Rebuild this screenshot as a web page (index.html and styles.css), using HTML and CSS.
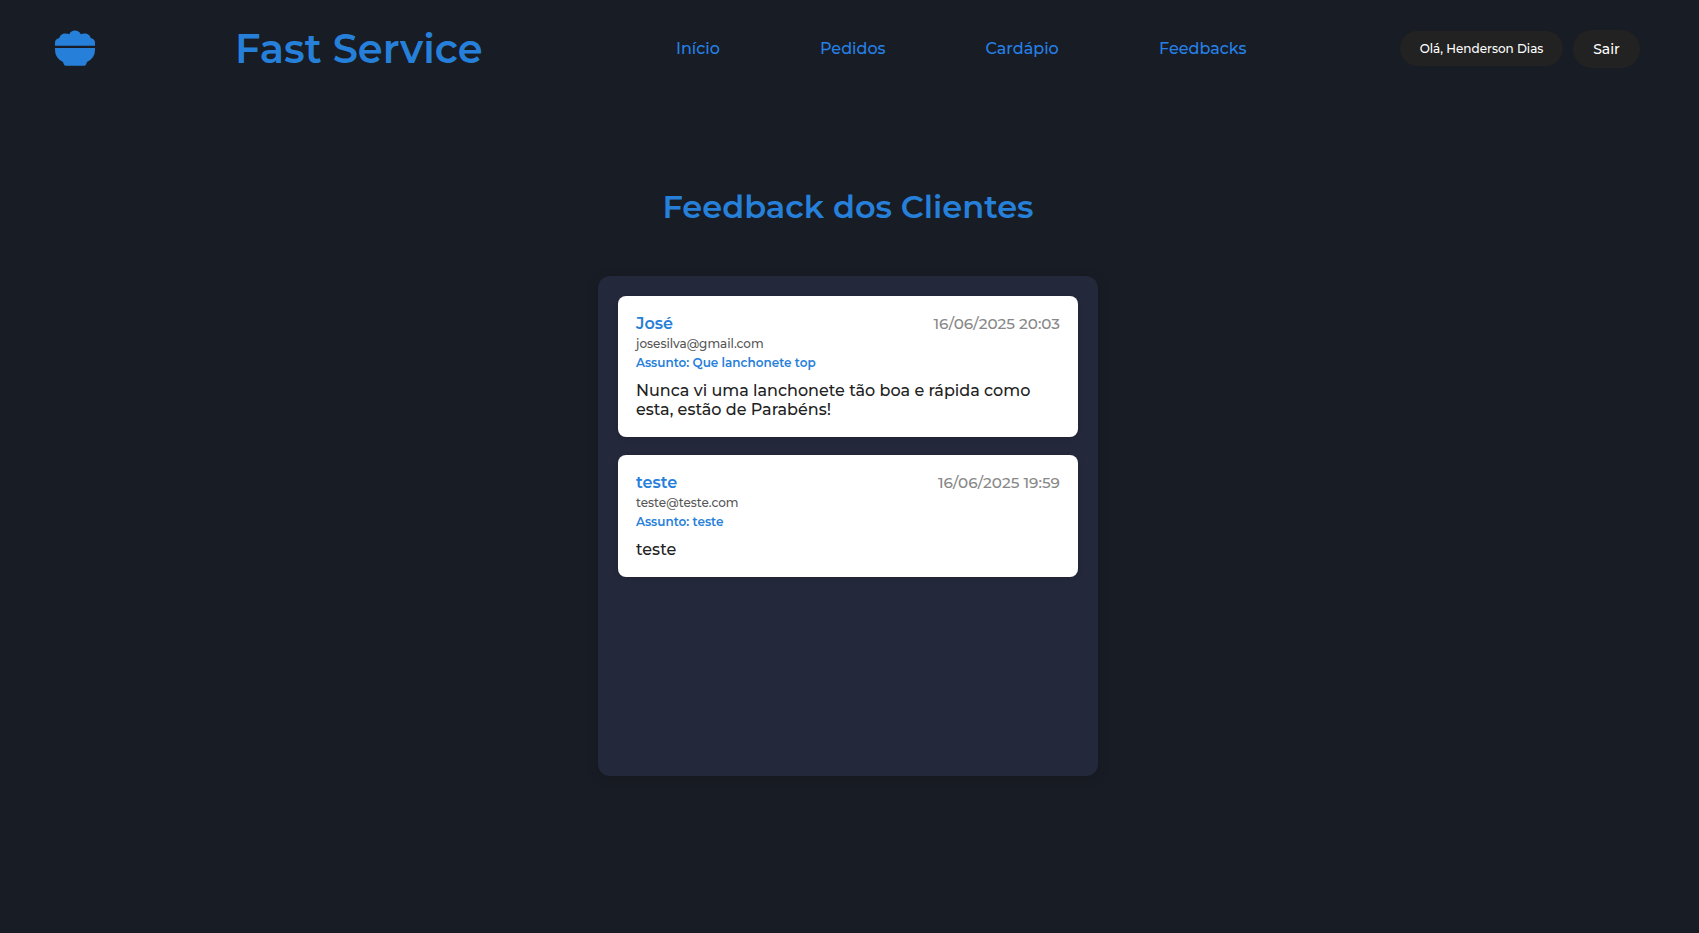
FILE: index.html
```html
<!DOCTYPE html>
<html lang="pt-BR">
<head>
<meta charset="utf-8">
<title>Fast Service - Feedbacks</title>
<link rel="stylesheet" href="styles.css">
</head>
<body>
<header class="header">
  <svg class="logo" viewBox="0 0 40 36" aria-hidden="true">
    <path d="M0 15.800V12.500Q0 9 4.300 8Q5.500 3.400 10.300 3.400Q12.500 3.300 14.200 4.200Q16 .5 20 .5T25.800 4.200Q27.500 3.300 29.700 3.400Q34.500 3.400 35.700 8Q40 9 40 12.500V15.800Z"/>
    <path d="M0 18H40V20Q40 28 32 32L31.200 34.300Q30.700 35.700 29.500 35.700H10.500Q9.300 35.700 8.800 34.300L8 32Q0 28 0 20Z"/>
  </svg>
  <div class="brand">Fast Service</div>
  <nav class="nav">
    <a class="nav-home">Início</a>
    <a class="nav-orders">Pedidos</a>
    <a class="nav-menu">Cardápio</a>
    <a class="nav-feedback">Feedbacks</a>
  </nav>
  <div class="account">
    <span class="greeting">Olá, Henderson Dias</span>
    <button class="logout">Sair</button>
  </div>
</header>
<main class="main">
  <h1 class="title">Feedback dos Clientes</h1>
  <section class="panel">
    <article class="card">
      <div class="card-head"><strong class="name">José</strong><time class="date">16/06/2025 20:03</time></div>
      <div class="email">josesilva@gmail.com</div>
      <div class="subject">Assunto: Que lanchonete top</div>
      <p class="message">Nunca vi uma lanchonete tão boa e rápida como<br>esta, estão de Parabéns!</p>
    </article>
    <article class="card">
      <div class="card-head"><strong class="name">teste</strong><time class="date">16/06/2025 19:59</time></div>
      <div class="email">teste@teste.com</div>
      <div class="subject">Assunto: teste</div>
      <p class="message">teste</p>
    </article>
  </section>
</main>
</body>
</html>
```
FILE: styles.css
```css
* { box-sizing: border-box; margin: 0; padding: 0; }
body {
  min-height: 933px;
  background: #181c24;
  font-family: Montserrat, Inter, "Liberation Sans", sans-serif;
  font-weight: 500;
  color: #222;
  white-space: nowrap;
}
.header { display: flex; align-items: center; height: 98px; padding: 0 59px 0 55px; }
.logo { width: 40px; height: 36px; fill: #2680d9; flex: none; margin-bottom: 2px; }
.brand { width: 246px; margin-left: 140px; color: #2680d9; font-size: 40px; font-weight: 600; padding-bottom: 1px; }
.nav { display: flex; gap: 100px; margin-left: 195px; font-size: 16px; color: #2680e6; padding-bottom: 2px; }
.nav-home { width: 44px; }
.nav-orders { width: 65.5px; }
.nav-menu { width: 73.500px; }
.nav-feedback { width: 88px; }
.account { display: flex; align-items: center; gap: 10px; margin-left: auto; color: #fff; }
.greeting { width: 163px; height: 35px; margin-bottom: 1px; border-radius: 18px; background: #222; line-height: 35px; text-align: center; font-size: 12px; }
.logout { width: 67px; height: 38px; border: 0; border-radius: 19px; background: #222; color: #fff; font: 500 14px Montserrat, Inter, sans-serif; }
.main { display: flex; flex-direction: column; align-items: center; padding: 88px 3px 0 0; }
.title { height: 90px; color: #2680d9; font-size: 32px; line-height: 41px; font-weight: 600; }
.panel { display: flex; flex-direction: column; gap: 18px; width: 500px; height: 500px; padding: 20px; border-radius: 12px; background: #24283b; box-shadow: 0 2px 12px rgba(0, 0, 0, .15); }
.card { padding: 18px; border-radius: 8px; background: #fff; box-shadow: 0 1px 4px rgba(0, 0, 0, .15); }
.card-head { display: flex; justify-content: space-between; height: 20px; line-height: 20px; }
.name { color: #2680d9; font-size: 16px; font-weight: 600; }
.date { color: #888; font-size: 15.2px; }
.email { height: 19px; line-height: 19px; font-size: 12px; color: #555; }
.subject { height: 19px; line-height: 19px; font-size: 12px; font-weight: 600; color: #2680d9; }
.message { margin-top: 9px; font-size: 16px; line-height: 19px; }
```
